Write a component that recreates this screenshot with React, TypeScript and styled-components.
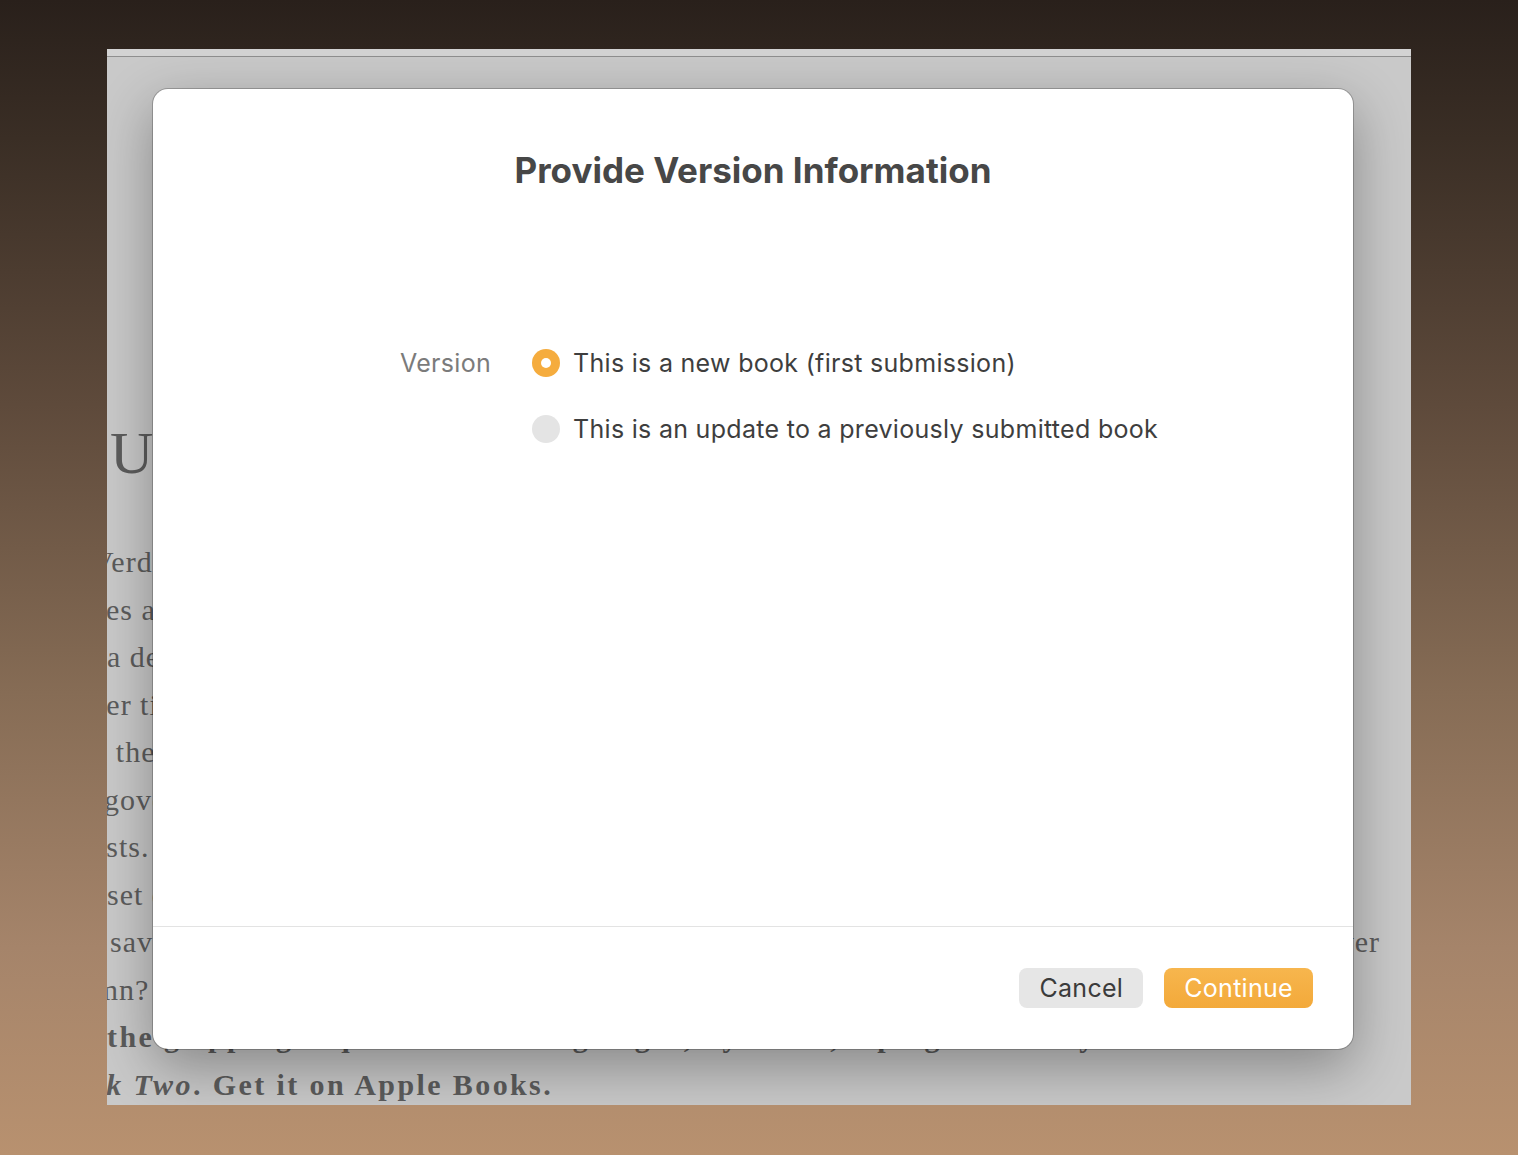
import styled, { createGlobalStyle } from "styled-components";

const ORANGE = "#f5ac3e";
const SERIF = `"Liberation Serif", "DejaVu Serif", serif`;
const SANS = `Inter, "Noto Sans", "Liberation Sans", sans-serif`;

const GlobalStyle = createGlobalStyle`
  html, body {
    margin: 0;
    padding: 0;
  }
  body {
    min-height: 100vh;
    background: linear-gradient(
      180deg,
      #29201b 0%,
      #3a2e25 12%,
      #5e4a3b 35%,
      #866c55 60%,
      #a5846a 82%,
      #b8916f 100%
    );
    font-family: ${SANS};
  }
`;

const Desktop = styled.div`
  width: 1518px;
  height: 1155px;
  padding: 49px 0 0 107px;
  box-sizing: border-box;
`;

const Window = styled.div`
  position: relative;
  width: 1304px;
  height: 1056px;
  overflow: hidden;
  background: #c9c9c9;
`;

const TitleStrip = styled.div`
  height: 7px;
  background: #d3d3d3;
  border-bottom: 1px solid #8f8f8f;
`;

const Article = styled.div`
  width: 1273px;
  padding-top: 366px;
  color: #5c5c5c;
  font-family: ${SERIF};
`;

const Heading = styled.div`
  font-size: 60px;
  line-height: 60px;
  margin: 0 0 55px 3px;
  white-space: nowrap;
`;

const Line = styled.div<{ $cut: number; $bold?: boolean; $justify?: boolean }>`
  margin-left: ${(p) => -p.$cut}px;
  font-size: 30px;
  line-height: 47.5px;
  height: 47.5px;
  letter-spacing: ${(p) => (p.$bold ? 2.4 : 1)}px;
  font-weight: ${(p) => (p.$bold ? 700 : 400)};
  white-space: ${(p) => (p.$justify ? "normal" : "nowrap")};
  text-align: ${(p) => (p.$justify ? "justify" : "left")};
  text-align-last: ${(p) => (p.$justify ? "justify" : "auto")};
  overflow: hidden;
`;

const Sheet = styled.div`
  position: absolute;
  left: 46px;
  top: 40px;
  width: 1200px;
  height: 960px;
  display: flex;
  flex-direction: column;
  background: #ffffff;
  border-radius: 15px;
  box-shadow: 0 0 0 1px rgba(0, 0, 0, 0.22), 0 18px 55px rgba(0, 0, 0, 0.33);
  overflow: hidden;
`;

const SheetBody = styled.div`
  flex: 1;
  padding-top: 61px;
`;

const Title = styled.h1`
  margin: 0;
  text-align: center;
  font-size: 35px;
  line-height: 40px;
  font-weight: 700;
  color: #474747;
`;

const Field = styled.div`
  display: grid;
  grid-template-columns: 338px 1fr;
  column-gap: 41px;
  margin-top: 153px;
  font-size: 25px;
  letter-spacing: 0.3px;
`;

const FieldLabel = styled.div`
  text-align: right;
  line-height: 40px;
  color: #7b7b7b;
`;

const Options = styled.div`
  display: flex;
  flex-direction: column;
  gap: 26px;
`;

const Option = styled.label`
  display: flex;
  align-items: center;
  gap: 13px;
  height: 40px;
  color: #3e3e3e;
`;

const Radio = styled.span<{ $checked?: boolean }>`
  position: relative;
  width: 28px;
  height: 28px;
  border-radius: 50%;
  background: ${(p) => (p.$checked ? ORANGE : "#e4e4e4")};

  &::after {
    content: "";
    display: ${(p) => (p.$checked ? "block" : "none")};
    position: absolute;
    left: 9px;
    top: 9px;
    width: 10px;
    height: 10px;
    border-radius: 50%;
    background: #ffffff;
  }
`;

const Footer = styled.div`
  height: 122px;
  border-top: 1px solid #e3e3e3;
  display: flex;
  align-items: center;
  justify-content: flex-end;
  gap: 21px;
  padding-right: 40px;
`;

const Button = styled.button<{ $primary?: boolean }>`
  height: 40px;
  padding: 0 20px;
  border: none;
  border-radius: 8px;
  font-family: ${SANS};
  font-size: 25px;
  letter-spacing: 0.3px;
  color: ${(p) => (p.$primary ? "#ffffff" : "#3b3b3b")};
  background: ${(p) =>
    p.$primary ? "linear-gradient(180deg, #f7b64e 0%, #f3a93a 100%)" : "#e6e6e6"};
`;

const lines = [
  { cut: 15, text: "Verdant hills rolled down toward the harbour where boats waited." },
  { cut: 44, text: "times a week the old ferry crossed the bay, carrying bread" },
  { cut: 0, text: "a deep blue that only appears in the last hour before the storm" },
  { cut: 47, text: "never tired of the view from the lighthouse, no matter the season" },
  { cut: 25, text: "in the end, it was the letters that mattered most, not promises" },
  { cut: 3, text: "government in the capital had long forgotten the small islands" },
  { cut: 47, text: "guests. Every summer they came back, and every autumn they left" },
  { cut: 32, text: "onset of the long winter, when the sea turned grey and cold" },
];

const App = () => (
  <>
    <GlobalStyle />
    <Desktop>
      <Window>
        <TitleStrip />
        <Article>
          <Heading>Under the Lighthouse</Heading>
          {lines.map((l) => (
            <Line key={l.text} $cut={l.cut}>
              {l.text}
            </Line>
          ))}
          <Line $cut={-3} $justify>
            save what was left of the village, and so that winter she walked every day to the river
          </Line>
          <Line $cut={68}>autumn? She never asked, and nobody told her why the bells stopped.</Line>
          <Line $cut={0} $bold>
            the gripping sequel to The Long Night, by turns, a poignant story
          </Line>
          <Line $cut={58} $bold>
            <i>Book Two</i>. Get it on Apple Books.
          </Line>
        </Article>

        <Sheet>
          <SheetBody>
            <Title>Provide Version Information</Title>
            <Field>
              <FieldLabel>Version</FieldLabel>
              <Options>
                <Option>
                  <Radio $checked />
                  This is a new book (first submission)
                </Option>
                <Option>
                  <Radio />
                  This is an update to a previously submitted book
                </Option>
              </Options>
            </Field>
          </SheetBody>
          <Footer>
            <Button>Cancel</Button>
            <Button $primary>Continue</Button>
          </Footer>
        </Sheet>
      </Window>
    </Desktop>
  </>
);

export default App;
